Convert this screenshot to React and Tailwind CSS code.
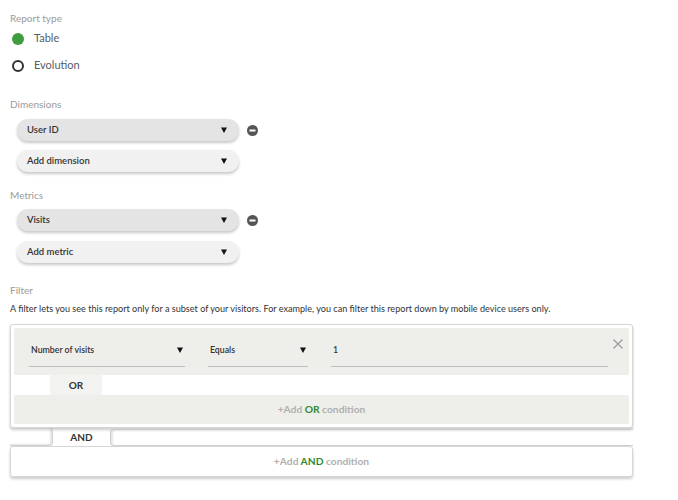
import React from "react";

const font = { fontFamily: 'Lato, "Open Sans", sans-serif' };

function Arrow() {
  return (
    <svg width="6" height="6" viewBox="0 0 6 6" className="shrink-0">
      <polygon points="0,0.5 6,0.5 3,6" fill="#111" />
    </svg>
  );
}

function Minus() {
  return (
    <svg width="11" height="11" viewBox="0 0 11 11" className="shrink-0">
      <circle cx="5.5" cy="5.5" r="5.5" fill="#555" />
      <rect x="2.5" y="4.5" width="6" height="2" fill="#fff" />
    </svg>
  );
}

function Pill({ label, dark, remove }) {
  return (
    <div className="flex items-center gap-[8px] ml-[7px]">
      <div
        className={
          "w-[222px] h-[22px] rounded-full flex items-center justify-between pl-[10px] pr-[12px] shadow-[0_2px_3px_rgba(0,0,0,0.22)] " +
          (dark ? "bg-[#e4e4e4]" : "bg-[#f1f1f1]")
        }
      >
        <span className="text-[9.5px] font-semibold text-[#333]">{label}</span>
        <Arrow />
      </div>
      {remove && <Minus />}
    </div>
  );
}

function Field({ label, w, arrow }) {
  return (
    <div className={"flex flex-col " + w}>
      <div className="h-[17px] flex items-center justify-between pl-[2px] pr-[2px]">
        <span className="text-[8.75px] font-semibold text-[#333]">{label}</span>
        {arrow && <Arrow />}
      </div>
      <div className="h-px bg-[#bdbdbd] mt-[8px]" />
    </div>
  );
}

export default function App() {
  return (
    <div className="bg-white min-h-[500px] px-[10px] pt-[11px]" style={font}>
      <div className="text-[10px] leading-[14px] text-[#9a9a9a]">Report type</div>
      <div className="h-[27px] flex items-center gap-[10px] ml-[2px]">
        <div className="w-[12px] h-[12px] rounded-full bg-[#3f9d3f]" />
        <span className="text-[11px] text-[#555d66]">Table</span>
      </div>
      <div className="h-[27px] flex items-center gap-[10px] ml-[2px]">
        <div className="w-[12px] h-[12px] rounded-full border-2 border-[#333]" />
        <span className="text-[11px] text-[#555d66]">Evolution</span>
      </div>

      <div className="mt-[18px] text-[10px] leading-[14px] text-[#9a9a9a]">Dimensions</div>
      <div className="mt-[8px] flex flex-col gap-[9px]">
        <Pill label="User ID" dark remove />
        <Pill label="Add dimension" />
      </div>

      <div className="mt-[16px] text-[10px] leading-[14px] text-[#9a9a9a]">Metrics</div>
      <div className="mt-[7px] flex flex-col gap-[10px]">
        <Pill label="Visits" dark remove />
        <Pill label="Add metric" />
      </div>

      <div className="mt-[20px] text-[10px] leading-[14px] text-[#9a9a9a]">Filter</div>
      <div className="mt-[4px] text-[9.1px] leading-[16px] text-[#333]">
        A filter lets you see this report only for a subset of your visitors. For example, you can filter this report down by mobile device users only.
      </div>

      <div className="mt-[7px] w-[623px]">
        <div className="border border-[#d6d6d6] rounded-[3px] bg-white p-[3px] shadow-[0_2px_3px_rgba(0,0,0,0.2)]">
          <div className="h-[47px] bg-[#eeeeea] rounded-[2px] flex items-center pl-[15px] pr-[8px] relative">
            <div className="flex items-start gap-[23px] mt-[5px]">
              <Field label="Number of visits" w="w-[156px]" arrow />
              <Field label="Equals" w="w-[100px]" arrow />
              <Field label="1" w="w-[277px]" />
            </div>
            <svg width="10" height="10" viewBox="0 0 10 10" className="absolute right-[6px] top-[11px]">
              <path d="M0.5 0.5 L9.5 9.5 M9.5 0.5 L0.5 9.5" stroke="#9a9a9a" strokeWidth="1.2" />
            </svg>
          </div>
          <div className="h-[20px] flex">
            <div className="w-[36px]" />
            <div className="w-[52px] bg-[#f3f3f1] flex items-center justify-center text-[10px] font-bold text-[#333]">OR</div>
          </div>
          <div className="h-[29px] bg-[#eeeeea] rounded-[2px] flex items-center justify-center text-[10.25px] font-bold text-[#b0b0b0]">
            <span>+Add <span className="text-[#2e8b2e]">OR</span> condition</span>
          </div>
        </div>
        <div className="h-[18px] flex">
          <div className="w-[43px] border-r border-b border-[#cfcfcf] rounded-br-[4px] shadow-[inset_-2px_-1px_2px_rgba(0,0,0,0.1)]" />
          <div className="w-[57px] flex items-center justify-center text-[10px] font-bold text-[#333]">AND</div>
          <div className="flex-1 border-l border-t border-b border-[#cfcfcf] rounded-l-[4px] shadow-[inset_2px_1px_2px_rgba(0,0,0,0.1)]" />
        </div>
        <div className="h-[31px] border border-[#d6d6d6] rounded-[3px] bg-white shadow-[0_2px_3px_rgba(0,0,0,0.2)] flex items-center justify-center text-[10.25px] font-bold text-[#b0b0b0]">
          <span>+Add <span className="text-[#2e8b2e]">AND</span> condition</span>
        </div>
      </div>
    </div>
  );
}
